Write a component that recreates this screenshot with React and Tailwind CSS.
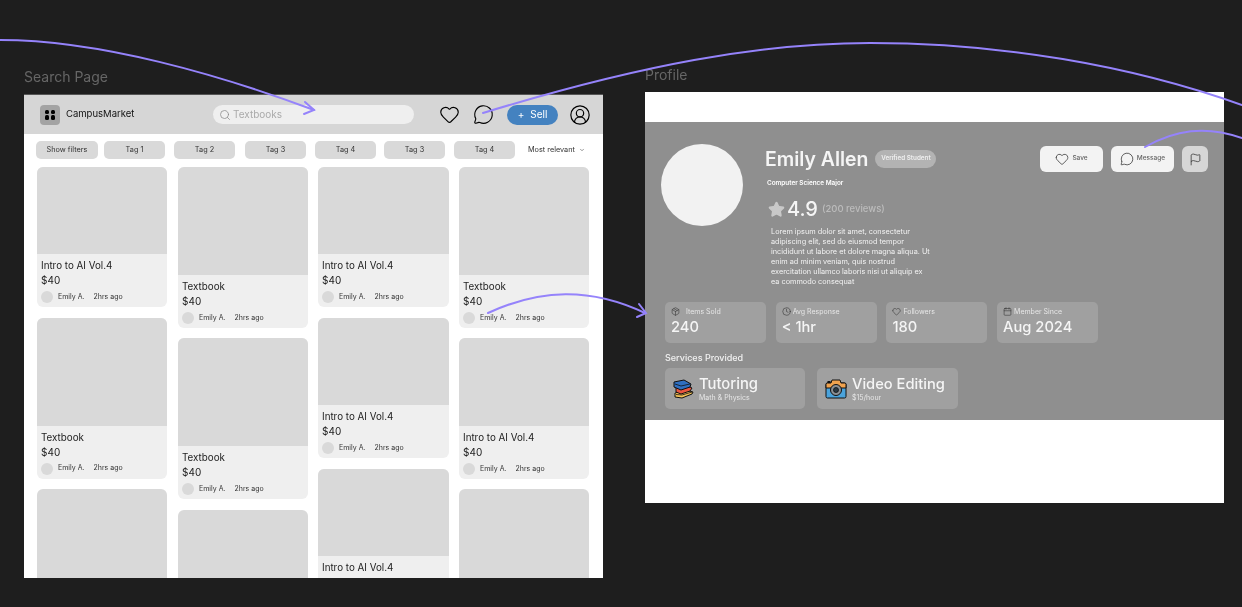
import React from "react";
import { Search, Heart, MessageCircle, CircleUserRound, Flag, Package, Clock, Calendar, Star, ChevronDown } from "lucide-react";

// show: how much of the card text is still inside the frame before it clips
const columns = [
  { cls: "ml-[13px] w-[130px] gap-[10.5px]", cards: [["Intro to AI Vol.4", "h-[87px]", "all"], ["Textbook", "h-[108px]", "all"], ["", "h-[108px]", "none"]] },
  { cls: "ml-[11px] w-[130px] gap-[10.4px]", cards: [["Textbook", "h-[108px]", "all"], ["Textbook", "h-[108px]", "all"], ["", "h-[108px]", "none"]] },
  { cls: "ml-[10px] w-[131px] gap-[11px]", cards: [["Intro to AI Vol.4", "h-[87px]", "all"], ["Intro to AI Vol.4", "h-[87px]", "all"], ["Intro to AI Vol.4", "h-[87px]", "title"]] },
  { cls: "ml-[10px] w-[130px] gap-[10.4px]", cards: [["Textbook", "h-[108px]", "all"], ["Intro to AI Vol.4", "h-[87.5px]", "all"], ["", "h-[108px]", "none"]] },
];

const tags = [
  ["Show filters", "ml-[12px] w-[62px]"],
  ["Tag 1", "ml-[6px] w-[61px]"],
  ["Tag 2", "ml-[9px] w-[61px]"],
  ["Tag 3", "ml-[10px] w-[61px]"],
  ["Tag 4", "ml-[9px] w-[61px]"],
  ["Tag 3", "ml-[8px] w-[61px]"],
  ["Tag 4", "ml-[9px] w-[61px]"],
];

const stats = [
  { label: "Items Sold", value: "240", icon: <Package size={9} strokeWidth={1.5} />, gap: "gap-[6px]" },
  { label: "Avg Response", value: "< 1hr", icon: <Clock size={9} strokeWidth={1.5} />, gap: "gap-[2px]" },
  { label: "Followers", value: "180", icon: <Heart size={9} strokeWidth={1.5} />, gap: "gap-[2px]" },
  { label: "Member Since", value: "Aug 2024", icon: <Calendar size={9} strokeWidth={1.5} />, gap: "gap-[2px]" },
];

const BooksIcon = () => (
  <svg width="22" height="20" viewBox="0 0 22 20">
    <path d="M2 14 L13 11 L20 13 L19 15 L9 19 L2 18 Z" fill="#f4c257" stroke="#111" strokeWidth="1" />
    <path d="M3 15.5 L9 16 L19 13" fill="none" stroke="#111" strokeWidth="0.8" />
    <path d="M3 8 L13 6 L19 9 L17 12 L8 15 L3 13 Z" fill="#e9553f" stroke="#111" strokeWidth="1" />
    <path d="M1 3 L11 1 L18 5 L17 8 L8 11 L1 8 Z" fill="#2f6fc0" stroke="#111" strokeWidth="1" />
    <path d="M2 5 L8 7 L17 5" fill="none" stroke="#111" strokeWidth="0.8" />
  </svg>
);

const CameraIcon = () => (
  <svg width="22" height="20" viewBox="0 0 22 20">
    <rect x="1" y="4" width="20" height="15" rx="1.5" fill="#4aa3dc" stroke="#111" strokeWidth="1" />
    <path d="M1 9 V5.5 Q1 4 2.5 4 H6 L7 1 H15 L16 4 H19.5 Q21 4 21 5.5 V9 Z" fill="#f0a24e" stroke="#111" strokeWidth="1" />
    <circle cx="11" cy="11" r="5.5" fill="#8a8f94" stroke="#111" strokeWidth="1" />
    <circle cx="11" cy="11" r="2.5" fill="#2b3a44" stroke="#111" strokeWidth="0.8" />
    <rect x="2.5" y="2" width="3" height="2" fill="#111" />
  </svg>
);

const Card = ({ title, imgClass, show }) => (
  <div className="shrink-0 rounded-[6px] overflow-hidden bg-[#efefef]">
    <div className={`${imgClass} bg-[#d9d9d9]`} />
    {show !== "none" && (
      <div className="h-[53px] pl-[4px] pt-[6px]">
        <div className="text-[9.8px] leading-[12px] text-[#222]">{title}</div>
        {show === "all" && (
          <>
            <div className="mt-[2px] text-[10px] leading-[12px] text-[#222]">$40</div>
            <div className="mt-[5px] flex items-center">
              <div className="w-[12px] h-[12px] rounded-full bg-[#d9d9d9]" />
              <span className="ml-[5px] text-[7px] text-[#333]">Emily A.</span>
              <span className="ml-[9px] text-[7px] text-[#333]">2hrs ago</span>
            </div>
          </>
        )}
      </div>
    )}
  </div>
);

const SearchFrame = () => (
  <div className="absolute left-[24px] top-[68px] w-[579px] will-change-transform">
    <div className="text-[14px] leading-[17px] text-[#666]">Search Page</div>
    <div className="mt-[9px] h-[484px] overflow-hidden bg-white border-t border-[#555]">
      <div className="h-[39px] bg-[#d6d6d6] flex items-center">
        <div className="ml-[16px] w-[20px] h-[20px] rounded-[4px] bg-[#a3a3a3] grid grid-cols-2 gap-[1.5px] p-[5px]">
          <div className="rounded-[1.5px] bg-black" />
          <div className="rounded-[1.5px] bg-black" />
          <div className="rounded-[1.5px] bg-black" />
          <div className="rounded-[1.5px] bg-black" />
        </div>
        <span className="ml-[6px] w-[68px] text-[9.5px] whitespace-nowrap text-[#111]">CampusMarket</span>
        <div className="ml-[79px] w-[201px] h-[19px] rounded-full bg-[#efefef] flex items-center pl-[6px]">
          <Search size={12} strokeWidth={1.5} className="text-[#888]" />
          <span className="ml-[2px] text-[10px] text-[#aaa]">Textbooks</span>
        </div>
        <Heart size={21} strokeWidth={1.3} className="ml-[25px] text-black" />
        <MessageCircle size={21} strokeWidth={1.3} className="ml-[13px] text-black" />
        <div className="ml-[13px] w-[51px] h-[20px] rounded-full bg-[#4482c0] flex items-center justify-center text-[10px] text-white gap-[6px]">
          <span>+</span><span>Sell</span>
        </div>
        <CircleUserRound size={22} strokeWidth={1.3} className="ml-[11px] text-black" />
      </div>
      <div className="flex items-center h-[18px] mt-[7px]">
        {tags.map(([label, cls], i) => (
          <div key={i} className={`${cls} h-[18px] rounded-[5px] bg-[#d9d9d9] flex items-center justify-center text-[7.3px] text-[#333]`}>{label}</div>
        ))}
        <span className="ml-[13px] text-[7.3px] text-[#333]">Most relevant</span>
        <ChevronDown size={6} strokeWidth={2} className="ml-[4px] text-[#333]" />
      </div>
      <div className="flex mt-[8px]">
        {columns.map((col, i) => (
          <div key={i} className={`${col.cls} flex flex-col`}>
            {col.cards.map(([title, imgClass, show], j) => <Card key={j} title={title} imgClass={imgClass} show={show} />)}
          </div>
        ))}
      </div>
    </div>
  </div>
);

const ProfileFrame = () => (
  <div className="absolute left-[645px] top-[66px] w-[579px] will-change-transform">
    <div className="text-[14px] leading-[17px] text-[#666]">Profile</div>
    <div className="mt-[9px] h-[411px] bg-white pt-[30px]">
      <div className="h-[298px] bg-[#8f8f8f] pt-[22px]">
        <div className="flex h-[158px] pl-[16px]">
          <div className="w-[82px] h-[82px] rounded-full bg-[#f2f2f2] shrink-0" />
          <div className="ml-[22px] w-[262px] shrink-0">
            <div className="mt-[1px] flex items-center">
              <span className="text-[19.4px] leading-[28px] font-semibold text-[#f5f5f5]">Emily Allen</span>
              <span className="ml-[7px] w-[61px] h-[18px] rounded-full bg-[#b3b3b3] flex items-center justify-center text-[6.3px] font-semibold text-[#efefef]">Verified Student</span>
            </div>
            <div className="mt-[5px] ml-[2px] text-[6.4px] leading-[10px] font-semibold text-white">Computer Science Major</div>
            <div className="mt-[9px] ml-[3px] flex items-center h-[24px]">
              <Star size={17} fill="#c9c9c9" stroke="#c9c9c9" />
              <span className="ml-[2px] text-[20px] font-medium text-[#f5f5f5]">4.9</span>
              <span className="ml-[4px] text-[9.5px] font-medium text-[#bcbcbc]">(200 reviews)</span>
            </div>
            <p className="mt-[6px] ml-[6px] w-[161px] text-[7.3px] leading-[10.1px] text-[#f2f2f2]">
              Lorem ipsum dolor sit amet, consectetur adipiscing elit, sed do eiusmod tempor incididunt ut labore et dolore magna aliqua. Ut enim ad minim veniam, quis nostrud exercitation ullamco laboris nisi ut aliquip ex ea commodo consequat
            </p>
          </div>
          <div className="ml-[13px] flex items-start mt-[2px]">
            <div className="w-[63px] h-[26px] rounded-[6px] bg-[#f3f3f3] flex items-center justify-center gap-[3px] text-[6.5px] font-medium text-[#666]">
              <Heart size={14} strokeWidth={1.2} className="text-[#222]" /> Save
            </div>
            <div className="ml-[8px] w-[63px] h-[26px] rounded-[6px] bg-[#f3f3f3] flex items-center justify-center gap-[3px] text-[6.5px] font-medium text-[#666]">
              <MessageCircle size={14} strokeWidth={1.2} className="text-[#222]" /> Message
            </div>
            <div className="ml-[8px] w-[26px] h-[26px] rounded-[6px] bg-[#d6d6d6] flex items-center justify-center">
              <Flag size={13} strokeWidth={1.3} className="text-[#222]" />
            </div>
          </div>
        </div>
        <div className="flex ml-[20px] gap-[9.7px]">
          {stats.map((s) => (
            <div key={s.label} className="w-[101px] h-[41px] rounded-[5px] bg-[#a0a0a0] pl-[6px] pt-[5px]">
              <div className={`flex items-center ${s.gap} text-[7px] leading-[9px] text-[#e6e6e6]`}>
                <span className="text-[#333]">{s.icon}</span>{s.label}
              </div>
              <div className="mt-[2px] text-[14.7px] leading-[18px] font-medium text-[#f5f5f5]">{s.value}</div>
            </div>
          ))}
        </div>
        <div className="ml-[20px] mt-[9px] text-[9px] leading-[11px] font-medium text-[#f2f2f2]">Services Provided</div>
        <div className="flex ml-[20px] mt-[5px] gap-[12px]">
          <div className="w-[140px] h-[41px] rounded-[5px] bg-[#a0a0a0] flex items-center pl-[8px]">
            <BooksIcon />
            <div className="ml-[4px]">
              <div className="text-[14.8px] leading-[18px] font-medium text-[#f5f5f5]">Tutoring</div>
              <div className="text-[7px] leading-[9px] text-[#e6e6e6]">Math &amp; Physics</div>
            </div>
          </div>
          <div className="w-[141px] h-[41px] rounded-[5px] bg-[#a0a0a0] flex items-center pl-[8px]">
            <CameraIcon />
            <div className="ml-[5px]">
              <div className="text-[14.7px] leading-[18px] font-medium text-[#f5f5f5]">Video Editing</div>
              <div className="text-[7px] leading-[9px] text-[#e6e6e6]">$15/hour</div>
            </div>
          </div>
        </div>
      </div>
    </div>
  </div>
);

const Arrows = () => (
  <svg className="absolute inset-0 pointer-events-none" width="1242" height="607" viewBox="0 0 1242 607" fill="none" stroke="#9583fb" strokeWidth="2" strokeLinecap="round">
    <path d="M0 40 C100 40 220 75 314 110" />
    <path d="M305 102 L314 110 L304 114" />
    <path d="M483 113 C640 65 760 43 870 43 C1000 43 1130 65 1242 105" />
    <path d="M488 313 C540 289 590 287 645 313" />
    <path d="M639 304 L646 313 L637 317" />
    <path d="M1145 147 C1175 130 1205 125 1242 138" />
  </svg>
);

export default function App() {
  return (
    <div className="relative w-[1242px] h-[607px] overflow-hidden bg-[#1e1e1e] font-['Inter',sans-serif]">
      <SearchFrame />
      <ProfileFrame />
      <Arrows />
    </div>
  );
}
